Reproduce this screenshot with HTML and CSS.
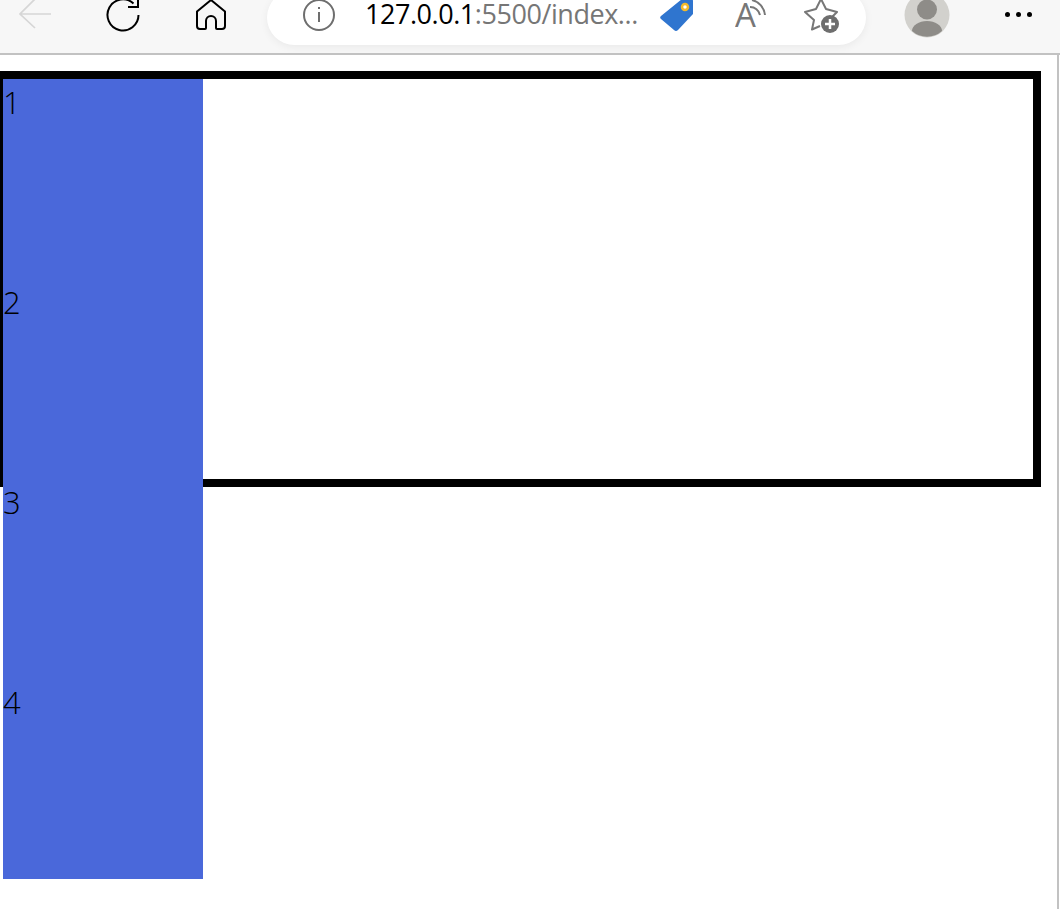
FILE: index.html
```html
<!DOCTYPE html>
<html lang="en">
<head>
  <meta charset="UTF-8">
  <title>127.0.0.1:5500/index.html</title>
  <link rel="stylesheet" href="styles.css">
</head>
<body>
  <div class="toolbar">
    <svg class="icon back" width="34" height="34" viewBox="0 0 34 34">
      <path d="M33 15H2M17 0 2 15l15 14" />
    </svg>
    <svg class="icon reload" width="34" height="34" viewBox="0 0 34 34">
      <path d="M27.5 4.5A15.5 15.5 0 1 0 32.5 16M32 -2v10h-10" />
    </svg>
    <svg class="icon home" width="32" height="32" viewBox="0 0 32 32">
      <path d="M16 0 2 11.5V26a3 3 0 0 0 3 3h5a1 1 0 0 0 1-1v-7a5 5 0 0 1 10 0v7a1 1 0 0 0 1 1h5a3 3 0 0 0 3-3V11.5Z" />
    </svg>
    <div class="address">
      <svg class="icon info" width="32" height="32" viewBox="0 0 32 32">
        <circle cx="16" cy="16" r="15" />
        <path d="M16 13v10M16 8v2" />
      </svg>
      <span class="url"><span class="host">127.0.0.1</span>:5500/index...</span>
      <svg class="icon tag" width="36" height="34" viewBox="0 0 36 34">
        <path class="tag-body" d="M2 17 23 0h9a2 2 0 0 1 2 2v13L19 31a3 3 0 0 1-4 0L2 20a2 2 0 0 1 0-3Z" />
        <circle class="tag-dot" cx="26" cy="8" r="3" />
      </svg>
      <svg class="icon aloud" width="34" height="32" viewBox="0 0 34 32">
        <text x="0" y="28">A</text>
        <path d="M15 8a10 10 0 0 1 10 8M17 1a17 17 0 0 1 13 15" />
      </svg>
      <svg class="icon fav" width="40" height="36" viewBox="0 0 40 36">
        <path class="star" d="M18 26l-8 3.5 2-9.5-9-8 11-3 5-10 5 10 11 3-5 5" />
        <circle class="badge" cx="28" cy="24" r="9" />
        <path class="plus" d="M28 19v10M23 24h10" />
      </svg>
    </div>
    <svg class="avatar" width="46" height="46" viewBox="0 0 46 46">
      <circle class="avatar-bg" cx="23" cy="15" r="22.5" />
      <circle class="avatar-fg" cx="23" cy="9.5" r="10" />
      <path class="avatar-fg" d="M8 31a15 10 0 0 1 30 0 22.5 22.5 0 0 1-30 0Z" />
    </svg>
    <div class="more"><i></i><i></i><i></i></div>
  </div>

  <div class="viewport">
    <div class="box">
      <ul class="list">
        <li>1</li>
        <li>2</li>
        <li>3</li>
        <li>4</li>
      </ul>
    </div>
  </div>
</body>
</html>
```

FILE: styles.css
```css
* {
  box-sizing: border-box;
}
html, body {
  margin: 0;
  padding: 0;
  height: 100%;
  overflow: hidden;
  background: #fff;
  font-family: "Open Sans", "Noto Sans", sans-serif;
}

/* browser chrome */
.toolbar {
  display: flex;
  align-items: flex-start;
  height: 55px;
  padding-left: 18px;
  background: #f7f7f7;
  border-bottom: 2px solid #c2c2c2;
  overflow: hidden;
}
.icon {
  flex: none;
}
.icon path, .icon circle {
  fill: none;
}
.back {
  margin-top: -1px;
}
.back path {
  stroke: #d6d6d6;
  stroke-width: 1.7;
}
.reload {
  margin: -1px 0 0 54px;
}
.reload path {
  stroke: #000;
  stroke-width: 2;
}
.home {
  margin: 0 0 0 55px;
}
.home path {
  stroke: #000;
  stroke-width: 2;
  stroke-linejoin: round;
}
.address {
  display: flex;
  flex: none;
  align-items: flex-start;
  width: 599px;
  height: 55px;
  margin: -10px 0 0 40px;
  padding: 10px 0 0 36px;
  background: #fff;
  border-radius: 28px;
  box-shadow: 0 2px 8px rgba(0,0,0,0.06);
}
.info {
  margin-top: -1px;
}
.info path, .info circle {
  stroke: #6e6e6e;
  stroke-width: 2;
}
.url {
  flex: none;
  width: 294px;
  margin-left: 30px;
  font-size: 27px;
  letter-spacing: -0.45px;
  line-height: 28px;
  color: #767676;
  white-space: nowrap;
}
.host {
  color: #000;
}
.tag {
  margin-top: -1px;
}
.icon .tag-body {
  fill: #2f75cf;
}
.icon .tag-dot {
  fill: #fff;
  stroke: #f2b92c;
  stroke-width: 2.5;
}
.aloud {
  margin: -1px 0 0 40px;
}
.aloud text {
  font-family: "Open Sans", sans-serif;
  font-weight: 400;
  font-size: 33px;
  fill: #777;
}
.aloud path {
  stroke: #777;
  stroke-width: 2;
}
.fav {
  margin-left: 33px;
}
.fav .star {
  stroke: #777;
  stroke-width: 2;
  stroke-linejoin: round;
}
.icon .badge {
  fill: #6e6e6e;
}
.fav .plus {
  stroke: #fff;
  stroke-width: 2.5;
}
.avatar {
  flex: none;
  margin-left: 38px;
}
.avatar-bg {
  fill: #d2d1cd;
}
.avatar-fg {
  fill: #8e8c88;
}
.more {
  display: flex;
  gap: 6px;
  margin: 12px 0 0 55px;
}
.more i {
  width: 5px;
  height: 5px;
  border-radius: 50%;
  background: #000;
}

/* page */
.viewport {
  height: 854px;
  padding-top: 16px;
  border-right: 2px solid #c2c2c2;
  margin-right: 1px;
  overflow: hidden;
}
.box {
  width: 1046px;
  height: 416px;
  margin-left: -5px;
  border: 8px solid #000;
}
.list {
  list-style: none;
  margin: 0;
  padding: 0;
  width: 200px;
  background: #4a68da;
}
.list li {
  height: 200px;
  font-size: 31px;
  font-weight: 300;
  line-height: 47px;
  color: #000;
}
```
